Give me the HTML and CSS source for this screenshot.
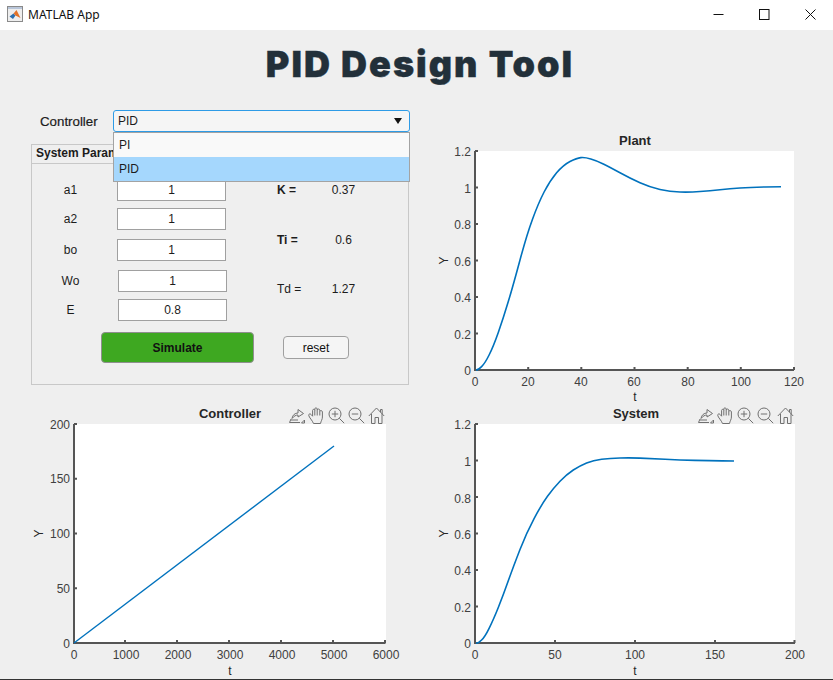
FILE: index.html
```html
<!DOCTYPE html>
<html lang="en">
<head>
    <meta charset="UTF-8">
    <title>MATLAB App</title>
    <link rel="stylesheet" href="styles.css">
</head>
<body>

    <svg class="icon-defs" width="0" height="0">
        <symbol id="ic-export" viewBox="0 0 17 17">
            <path d="M1.5 15.5H12M1.5 15.5L3 12M3 13H10" />
            <path d="M4 11.5C4.5 8 7 6 10 6V2.5L15.5 6.5L10 10V8C8 8 6 9 4 11.5Z" />
            <path class="solid" d="M13.5 16H16.5V13Z" />
        </symbol>
        <symbol id="ic-hand" viewBox="0 0 17 17">
            <path d="M5.5 16.5C4.5 13.5 1 10.5 .7 8.2C.7 6.8 2.2 6.5 3 7.4L4.6 9.2V3.4C4.6 2 6.6 2 6.8 3.4V1.9C6.8 .5 9 .5 9.2 1.9V2.9C9.4 1.6 11.6 1.8 11.8 3.1V4.4C12 3.2 14.4 3.4 14.4 4.8V10C14.4 12.5 13 14 12.5 16.5Z" />
            <path d="M6.8 3.4V8.5M9.2 2.9V8.5M11.8 4.4V8.5" />
        </symbol>
        <symbol id="ic-zoom-in" viewBox="0 0 17 17">
            <circle cx="7" cy="7" r="6" />
            <path d="M11.3 11.3L16.2 16.2M7 3.8V10.2M3.8 7H10.2" />
        </symbol>
        <symbol id="ic-zoom-out" viewBox="0 0 17 17">
            <circle cx="7" cy="7" r="6" />
            <path d="M11.3 11.3L16.2 16.2M3.8 7H10.2" />
        </symbol>
        <symbol id="ic-home" viewBox="0 0 17 17">
            <path d="M.8 9L8.5 1L16.2 9M12.5 5.2V2.5H14.2V7" />
            <path d="M3.5 7V16.5H7V10.5H10.5V16.5H14V7" />
        </symbol>
    </svg>

    <div class="app">
        <header class="titlebar">
            <svg class="app-icon" viewBox="0 0 16 16" width="16" height="16">
                <rect x=".5" y=".5" width="15" height="15" fill="#eeeeee" stroke="#8a8a8a" />
                <rect x="1" y="1" width="14" height="2" fill="#b9c6da" />
                <path d="M2.5 10.5L6.5 7.5L8.5 9.5L6 13Z" fill="#2a6fb0" />
                <path d="M6.5 7.5L9.5 4L13.5 12L10.5 10.5L8.5 9.5Z" fill="#e2732a" />
            </svg>
            <span class="app-name">MATLAB App</span>
            <div class="window-btns">
                <span class="window-btn"><svg viewBox="0 0 11 11" width="11" height="11"><path d="M.5 5.5H10.5" /></svg></span>
                <span class="window-btn"><svg viewBox="0 0 11 11" width="11" height="11"><rect x=".5" y=".5" width="9.5" height="10" /></svg></span>
                <span class="window-btn"><svg viewBox="0 0 11 11" width="11" height="11"><path d="M.5 .5L10.5 10.5M10.5 .5L.5 10.5" /></svg></span>
            </div>
        </header>

        <h1 class="page-title">PID Design Tool</h1>

        <main class="layout">
            <section class="controls">
                <div class="controller-row">
                    <label class="controller-label">Controller</label>
                    <div class="select">
                        <span>PID</span>
                        <span class="select-arrow"></span>
                        <ul class="select-list">
                            <li>PI</li>
                            <li class="selected">PID</li>
                        </ul>
                    </div>
                </div>

                <div class="panel">
                    <div class="panel-head"><span>System Parameters</span></div>
                    <div class="panel-top">
                        <div class="fields">
                            <label>a1</label><input type="text" value="1">
                            <label>a2</label><input type="text" value="1">
                            <label>bo</label><input type="text" value="1">
                            <label>Wo</label><input class="shifted" type="text" value="1">
                            <label>E</label><input class="shifted" type="text" value="0.8">
                        </div>
                        <div class="results">
                            <span class="strong">K =</span><span class="value">0.37</span>
                            <span class="strong">Ti =</span><span class="value">0.6</span>
                            <span>Td =</span><span class="value">1.27</span>
                        </div>
                    </div>
                    <div class="panel-btns">
                        <button class="btn-simulate">Simulate</button>
                        <button class="btn-reset">reset</button>
                    </div>
                </div>
            </section>

            <section class="plot">
                <svg class="chart" viewBox="420 100 413 303" width="413" height="303">
                    <rect class="axes-bg" x="475" y="151" width="319" height="219" />
                    <path class="axes-line" d="M475 151V370H794M475 151H478M475 187.5H478M475 224H478M475 260.5H478M475 297H478M475 333.5H478M528.2 370V367M581.3 370V367M634.5 370V367M687.7 370V367M740.8 370V367M794 370V367" />
                    <path class="curve" d="M476 370Q478.3 370 481.6 366.6Q485 363.3 489.1 355Q493.3 346.7 498.3 332.5Q503.3 318.3 508.3 301.6Q513.3 285 520 260Q526.7 235 532.5 219.2Q538.3 203.3 544.1 192Q550 180.7 556.6 172.8Q563.3 165 570 161.5Q576.7 158 580.8 157.6Q585 157.2 590.8 159Q596.7 160.7 603.3 164Q610 167.3 620 172.8Q630 178.3 640 182.8Q650 187.3 660 189.5Q670 191.7 680 192Q690 192.3 700 191.5Q710 190.7 720 189.7Q730 188.7 740 188Q750 187.3 765 187L781 186.7" />
                    <text class="chart-title" x="635" y="145">Plant</text>
                    <g class="ticks-y">
                        <text x="471" y="156">1.2</text>
                        <text x="471" y="193">1</text>
                        <text x="471" y="229">0.8</text>
                        <text x="471" y="266">0.6</text>
                        <text x="471" y="302">0.4</text>
                        <text x="471" y="339">0.2</text>
                        <text x="471" y="375">0</text>
                    </g>
                    <g class="ticks-x">
                        <text x="475" y="386">0</text>
                        <text x="528" y="386">20</text>
                        <text x="581" y="386">40</text>
                        <text x="634" y="386">60</text>
                        <text x="688" y="386">80</text>
                        <text x="741" y="386">100</text>
                        <text x="794" y="386">120</text>
                    </g>
                    <text class="axis-name" x="635" y="401">t</text>
                    <text class="axis-name" transform="translate(448 260.5) rotate(-90)">Y</text>
                </svg>
            </section>

            <section class="plot">
                <svg class="chart" viewBox="0 403 420 276" width="420" height="276">
                    <rect class="axes-bg" x="74" y="424" width="312" height="219" />
                    <path class="axes-line" d="M74 424V643H385.5M74 424H77M74 478.8H77M74 533.5H77M74 588.3H77M125 643V640M177 643V640M229 643V640M281 643V640M333 643V640M385 643V640" />
                    <path class="curve thin" d="M74 643L334 446" />
                    <text class="chart-title" x="230" y="418">Controller</text>
                    <g class="ticks-y">
                        <text x="70" y="429">200</text>
                        <text x="70" y="483">150</text>
                        <text x="70" y="538">100</text>
                        <text x="70" y="593">50</text>
                        <text x="70" y="648">0</text>
                    </g>
                    <g class="ticks-x">
                        <text x="74" y="659">0</text>
                        <text x="126" y="659">1000</text>
                        <text x="178" y="659">2000</text>
                        <text x="230" y="659">3000</text>
                        <text x="282" y="659">4000</text>
                        <text x="334" y="659">5000</text>
                        <text x="386" y="659">6000</text>
                    </g>
                    <text class="axis-name" x="230" y="675">t</text>
                    <text class="axis-name" transform="translate(43 533.5) rotate(-90)">Y</text>
                </svg>
                <div class="axes-toolbar toolbar-left">
                    <svg><use href="#ic-export" /></svg>
                    <svg><use href="#ic-hand" /></svg>
                    <svg><use href="#ic-zoom-in" /></svg>
                    <svg><use href="#ic-zoom-out" /></svg>
                    <svg><use href="#ic-home" /></svg>
                </div>
            </section>

            <section class="plot">
                <svg class="chart" viewBox="420 403 413 276" width="413" height="276">
                    <rect class="axes-bg" x="475" y="424" width="320" height="219" />
                    <path class="axes-line" d="M475 424V643H795M475 424H478M475 460.5H478M475 497H478M475 533.5H478M475 570H478M475 606.5H478M555 643V640M635 643V640M715 643V640M794.5 643V640" />
                    <path class="curve" d="M476 643.3Q478.3 643.3 481.6 640Q485 636.7 489.1 628.3Q493.3 620 498.3 607.5Q503.3 595 508.3 580.8Q513.3 566.7 520 549.5Q526.7 532.3 534.2 518.3Q541.7 504.3 547.5 496.3Q553.3 488.3 560 481.3Q566.7 474.3 573.3 470Q580 465.7 586.6 463Q593.3 460.3 601.6 459.3Q610 458.3 620 458Q630 457.7 640 458.1Q650 458.5 665 459.2Q680 460 695 460.4Q710 460.8 722 460.9L734 461" />
                    <text class="chart-title" x="636" y="418">System</text>
                    <g class="ticks-y">
                        <text x="471" y="429">1.2</text>
                        <text x="471" y="466">1</text>
                        <text x="471" y="503">0.8</text>
                        <text x="471" y="539">0.6</text>
                        <text x="471" y="575">0.4</text>
                        <text x="471" y="612">0.2</text>
                        <text x="471" y="648">0</text>
                    </g>
                    <g class="ticks-x">
                        <text x="475" y="659">0</text>
                        <text x="555" y="659">50</text>
                        <text x="635" y="659">100</text>
                        <text x="715" y="659">150</text>
                        <text x="795" y="659">200</text>
                    </g>
                    <text class="axis-name" x="635" y="675">t</text>
                    <text class="axis-name" transform="translate(448 533.5) rotate(-90)">Y</text>
                </svg>
                <div class="axes-toolbar toolbar-right">
                    <svg><use href="#ic-export" /></svg>
                    <svg><use href="#ic-hand" /></svg>
                    <svg><use href="#ic-zoom-in" /></svg>
                    <svg><use href="#ic-zoom-out" /></svg>
                    <svg><use href="#ic-home" /></svg>
                </div>
            </section>
        </main>
    </div>

</body>
</html>
```

FILE: styles.css
```css
* {
    margin: 0; padding: 0;
    box-sizing: border-box;
}
body {
    background: #efefef;
    font-family: "Liberation Sans", Arial, sans-serif;
    font-size: 12px;
    color: #1c1c1c;
}
.icon-defs {
    position: absolute;
}
.app {
    width: 833px;
    height: 680px;
    display: flex;
    flex-direction: column;
    border-bottom: 1px solid #333;
    overflow: hidden;
}

/* window title bar */
.titlebar {
    height: 30px;
    flex: none;
    background: white;
    display: flex;
    align-items: center;
    padding-left: 7px;
}
.app-icon {
    margin-bottom: 2px;
}
.app-name {
    margin-left: 5px;
    margin-bottom: 1px;
    font-family: "Noto Sans", sans-serif;
    font-size: 12px;
    color: #111;
}
.window-btns {
    margin-left: auto;
    display: flex;
}
.window-btn {
    width: 46px;
    height: 29px;
    margin-bottom: 1px;
    display: flex;
    align-items: center;
    justify-content: center;
}
.window-btn svg {
    fill: none;
    stroke: #111;
    stroke-width: 1;
}

.page-title {
    height: 70px;
    flex: none;
    padding: 12px 0 0 7px;
    text-align: center;
    font-family: Inter, "Liberation Sans", sans-serif;
    font-size: 36px;
    font-weight: 900;
    line-height: 44px;
    letter-spacing: 2px;
    -webkit-text-stroke: .4px #22303a;
    color: #22303a;
}

.layout {
    display: grid;
    grid-template-columns: 420px 413px;
    grid-template-rows: 303px 276px;
}
.plot {
    position: relative;
}
.chart {
    display: block;
    font-family: "Liberation Sans", Arial, sans-serif;
    font-size: 12px;
}

/* controls on the top left */
.controls {
    padding: 10px 0 0 31px;
}
.controller-row {
    display: flex;
    align-items: center;
    height: 22px;
}
.controller-label {
    width: 82px;
    padding-left: 9px;
    font-size: 13.3px;
    -webkit-text-stroke: .2px #1c1c1c;
}
.select {
    position: relative;
    width: 297px;
    height: 22px;
    padding: 0 7px 0 4px;
    display: flex;
    align-items: center;
    justify-content: space-between;
    background: #f5f5f5;
    border: 1px solid #2e9be6;
    border-radius: 3px;
}
.select-arrow {
    width: 0; height: 0;
    border-left: 4.5px solid transparent;
    border-right: 4.5px solid transparent;
    border-top: 6px solid #111;
}
.select-list {
    position: absolute;
    top: 21px;
    left: -1px;
    width: 297px;
    list-style: none;
    border: 1px solid #a3a3a3;
    background: #f9f9f9;
    z-index: 5;
}
.select-list li {
    height: 24px;
    padding: 0 5px;
    line-height: 24px;
}
.select-list .selected {
    background: #a5d7fd;
}

.panel {
    width: 378px;
    height: 241px;
    margin-top: 12px;
    border: 1px solid #c8c8c8;
}
.panel-head {
    height: 19px;
    padding-left: 4px;
    font-weight: bold;
    line-height: 17px;
    border-bottom: 1px solid #c8c8c8;
}
.panel-head span {
    display: block;
    width: 77px;
    overflow: hidden;
    white-space: nowrap;
}
.panel-top {
    display: flex;
    padding-top: 15px;
}
.fields {
    width: 195px;
    display: grid;
    grid-template-columns: 85px 110px;
    grid-template-rows: 29px 31px 31px 29px 22px;
}
.fields label {
    height: 22px;
    padding-right: 8px;
    line-height: 22px;
    text-align: center;
}
.fields input {
    width: 109px;
    height: 22px;
    background: white;
    border: 1px solid #a0a0a0;
    font: inherit;
    color: inherit;
    text-align: center;
}
.fields .shifted {
    margin-left: 1px;
}
.results {
    margin-left: 50px;
    display: grid;
    grid-template-columns: 47px 39px;
    grid-template-rows: 50px 49px 22px;
    line-height: 22px;
}
.results .strong {
    font-weight: bold;
}
.results .value {
    text-align: center;
}
.panel-btns {
    display: flex;
    align-items: center;
    margin-top: 11px;
    padding-left: 69px;
}
.panel-btns button {
    font: inherit;
    color: #111;
}
.panel-btns .btn-simulate {
    width: 153px;
    height: 31px;
    background: #3ea821;
    border: 1px solid #8f8f8f;
    border-radius: 4px;
    font-weight: bold;
}
.btn-reset {
    width: 66px;
    height: 23px;
    margin-left: 29px;
    background: #f5f5f5;
    border: 1px solid #a0a0a0;
    border-radius: 4px;
}

/* plots */
.axes-bg {
    fill: white;
}
.axes-line {
    fill: none;
    stroke: #555;
    stroke-width: 2;
}
.curve {
    fill: none;
    stroke: #0072bd;
    stroke-width: 1.6;
}
.curve.thin {
    stroke-width: 1.4;
}
.chart-title {
    font-size: 13px;
    font-weight: bold;
    fill: #262626;
    text-anchor: middle;
}
.ticks-y text {
    fill: #404040;
    text-anchor: end;
}
.ticks-x text {
    fill: #404040;
    text-anchor: middle;
}
.axis-name {
    fill: #262626;
    text-anchor: middle;
}
.axes-toolbar {
    position: absolute;
    top: 4px;
    display: flex;
    gap: 3px;
}
.toolbar-left {
    left: 288px;
}
.toolbar-right {
    left: 277px;
}
.axes-toolbar svg {
    width: 17px;
    height: 17px;
    fill: none;
    stroke: #707070;
    stroke-width: 1;
}
.axes-toolbar svg .solid {
    fill: #707070;
    stroke: none;
}
```
